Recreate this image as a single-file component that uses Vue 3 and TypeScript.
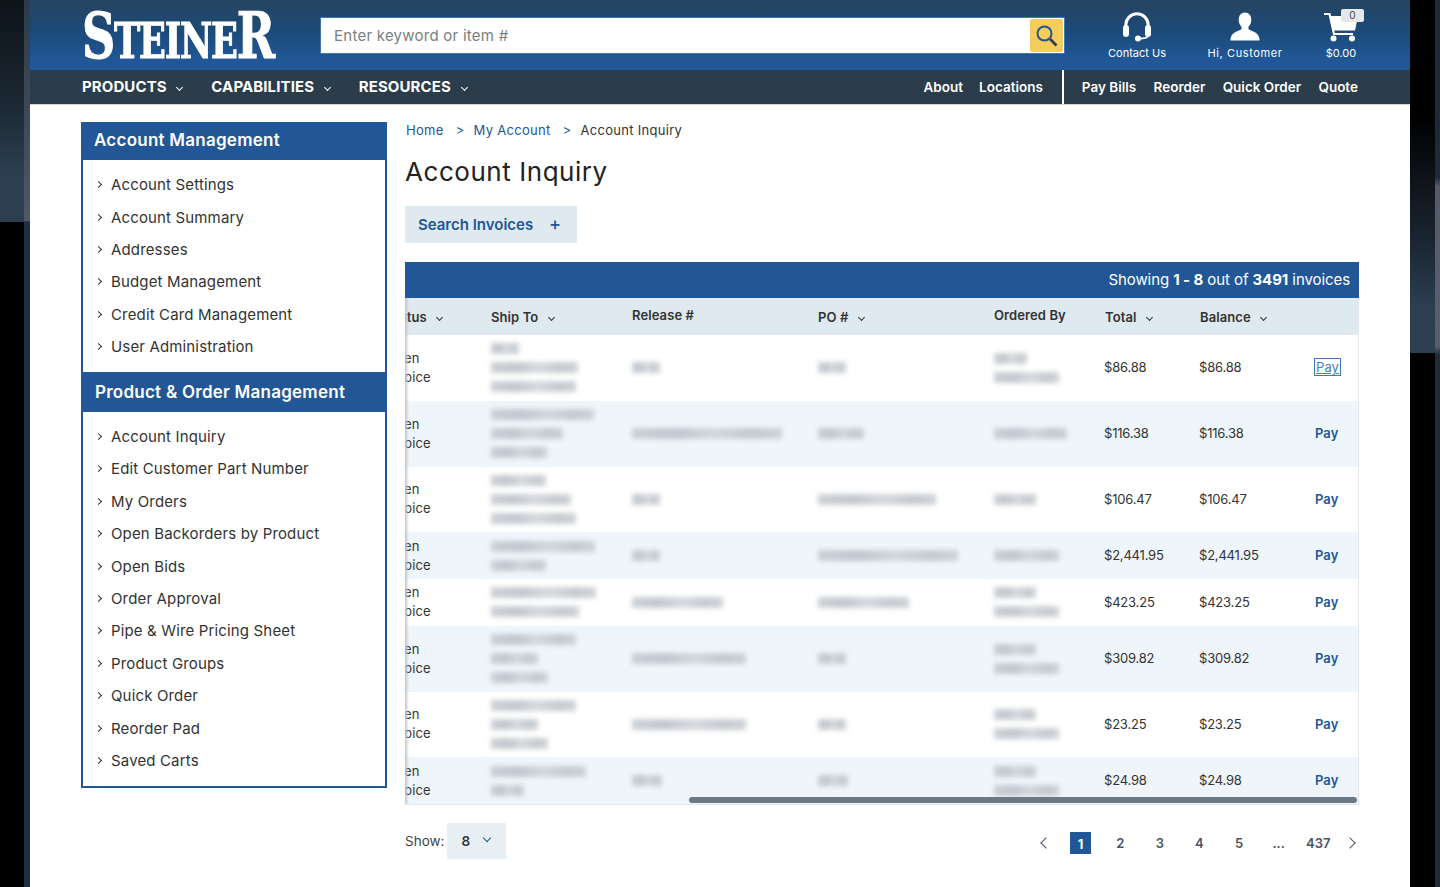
<script setup lang="ts">
// Account inquiry page: header, side menu, scrolled invoice table, pager.
type Invoice = {
  ship: number[];
  release: number;
  po: number;
  orderedBy: number[];
  total: string;
};

const topLinks = ["About", "Locations"];
const quickLinks = ["Pay Bills", "Reorder", "Quick Order", "Quote"];

const accountLinks = [
  "Account Settings",
  "Account Summary",
  "Addresses",
  "Budget Management",
  "Credit Card Management",
  "User Administration",
];
const orderLinks = [
  "Account Inquiry",
  "Edit Customer Part Number",
  "My Orders",
  "Open Backorders by Product",
  "Open Bids",
  "Order Approval",
  "Pipe & Wire Pricing Sheet",
  "Product Groups",
  "Quick Order",
  "Reorder Pad",
  "Saved Carts",
];

// Customer details are blurred out in the source, so only their widths are kept.
const invoices: Invoice[] = [
  { ship: [28, 87, 85], release: 28, po: 28, orderedBy: [33, 65], total: "$86.88" },
  { ship: [103, 72, 56], release: 150, po: 46, orderedBy: [73], total: "$116.38" },
  { ship: [55, 80, 85], release: 28, po: 118, orderedBy: [42], total: "$106.47" },
  { ship: [104, 55], release: 28, po: 140, orderedBy: [65], total: "$2,441.95" },
  { ship: [105, 88], release: 91, po: 91, orderedBy: [42, 65], total: "$423.25" },
  { ship: [85, 47, 57], release: 114, po: 28, orderedBy: [42, 65], total: "$309.82" },
  { ship: [85, 47, 57], release: 114, po: 28, orderedBy: [42, 65], total: "$23.25" },
  { ship: [95, 33], release: 30, po: 30, orderedBy: [42, 65], total: "$24.98" },
];

const pages = ["2", "3", "4", "5", "..."];
</script>

<template>
  <div class="page">
    <header class="masthead">
      <div class="logo-box">
        <div class="logo" aria-label="Steiner"><span class="big">S</span>TEINE<span class="big">R</span></div>
      </div>
      <div class="search">
        <input class="search-input" placeholder="Enter keyword or item #" />
        <button class="search-btn" type="button" aria-label="Search">
          <svg width="24" height="24" viewBox="0 0 24 24" fill="none">
            <circle cx="9.5" cy="9.5" r="7" stroke="#215797" stroke-width="2" />
            <path d="M15 15l6.5 6.5" stroke="#2b3c4b" stroke-width="2.6" />
          </svg>
        </button>
      </div>
      <div class="tools">
        <a class="tool tool-contact">
          <svg width="30" height="30" viewBox="0 0 30 30" fill="none">
            <path d="M3.8 15v-2a11.2 11.2 0 0 1 22.4 0v2" stroke="#fff" stroke-width="3" />
            <rect x="1" y="13" width="6" height="12" rx="3" fill="#fff" />
            <rect x="23" y="13" width="6" height="12" rx="3" fill="#fff" />
            <path d="M26 24c-.5 2-4 2.600-9 2.600" stroke="#fff" stroke-width="1.600" />
            <circle cx="16" cy="26.500" r="3" fill="#fff" />
          </svg>
          <span>Contact Us</span>
        </a>
        <a class="tool tool-user">
          <svg width="30" height="30" viewBox="0 0 30 30" fill="none">
            <path
              d="M15 .5c3.800 0 6.300 3 6.300 7.200 0 3-1.200 5.500-2.800 7v2.600c2 1.400 10.500 3 11 9.700v1.500H.5V27c.5-6.700 9-8.300 11-9.700v-2.600c-1.600-1.500-2.800-4-2.800-7C8.700 3.500 11.200.5 15 .5z"
              fill="#fff"
            />
          </svg>
          <span class="hi">Hi, Customer</span>
        </a>
        <a class="tool tool-cart">
          <svg width="36" height="30" viewBox="0 0 36 30" fill="none">
            <path d="M1 2h5.500l4.500 20h19" stroke="#fff" stroke-width="2.200" />
            <path d="M7 4h28l-3 14.500H10.500z" fill="#fff" />
            <circle cx="10.500" cy="26.500" r="3" fill="#fff" />
            <circle cx="29" cy="26.500" r="3" fill="#fff" />
          </svg>
          <span class="badge">0</span>
          <span>$0.00</span>
        </a>
      </div>
    </header>

    <nav class="navbar">
      <div class="nav-main">
        <a>PRODUCTS <i class="caret"></i></a>
        <a>CAPABILITIES <i class="caret"></i></a>
        <a>RESOURCES <i class="caret"></i></a>
      </div>
      <div class="nav-links">
        <a v-for="link in topLinks" :key="link">{{ link }}</a>
      </div>
      <div class="nav-links nav-quick">
        <a v-for="link in quickLinks" :key="link">{{ link }}</a>
      </div>
    </nav>

    <main class="main">
      <aside class="sidebar">
        <h2 class="side-title">Account Management</h2>
        <ul class="side-list">
          <li v-for="link in accountLinks" :key="link"><i class="arrow"></i>{{ link }}</li>
        </ul>
        <h2 class="side-title second">Product &amp; Order Management</h2>
        <ul class="side-list">
          <li v-for="link in orderLinks" :key="link"><i class="arrow"></i>{{ link }}</li>
        </ul>
      </aside>

      <section class="content">
        <div class="crumbs">
          <a>Home</a><span class="sep">&gt;</span><a>My Account</a><span class="sep">&gt;</span><span>Account Inquiry</span>
        </div>
        <h1 class="title">Account Inquiry</h1>
        <button class="filter-btn" type="button">Search Invoices <span class="plus">+</span></button>

        <div class="count-bar">Showing <b>1 - 8</b> out of <b>3491</b> invoices</div>
        <div class="table">
          <div class="row head">
            <div class="status-cell">Status <i class="caret dark"></i></div>
            <div>Ship To <i class="caret dark"></i></div>
            <div class="raised">Release #</div>
            <div>PO # <i class="caret dark"></i></div>
            <div class="raised">Ordered By</div>
            <div>Total <i class="caret dark"></i></div>
            <div>Balance <i class="caret dark"></i></div>
            <div></div>
          </div>
          <div v-for="(inv, i) in invoices" :key="i" class="row body" :class="{ tint: i % 2 === 1 }">
            <div class="status-cell">Open<br />Invoice</div>
            <div class="lines"><span v-for="w in inv.ship" :key="w" class="smear" :style="{ width: w + 'px' }"></span></div>
            <div class="lines"><span class="smear" :style="{ width: inv.release + 'px' }"></span></div>
            <div class="lines"><span class="smear" :style="{ width: inv.po + 'px' }"></span></div>
            <div class="lines"><span v-for="w in inv.orderedBy" :key="w" class="smear" :style="{ width: w + 'px' }"></span></div>
            <div class="amount">{{ inv.total }}</div>
            <div class="amount">{{ inv.total }}</div>
            <div><a class="pay" :class="{ focused: i === 0 }">Pay</a></div>
          </div>
          <div class="scrollbar"></div>
        </div>

        <div class="foot">
          <label class="show">Show: <span class="select">8 <i class="caret blue"></i></span></label>
          <div class="pager">
            <span class="page-item first"><i class="pg-arrow prev"></i></span>
            <span class="page-item"><b class="current">1</b></span>
            <span v-for="p in pages" :key="p" class="page-item">{{ p }}</span>
            <span class="page-item">437</span>
            <span class="page-item last"><i class="pg-arrow next"></i></span>
          </div>
        </div>
      </section>
    </main>
  </div>
</template>

<style>
html,
body {
  margin: 0;
  height: 887px;
  overflow: hidden;
}
/* Desktop showing either side of the browser window */
body {
  background-color: #000;
  background-repeat: no-repeat;
  background-image:
    linear-gradient(#0d1319, #1b2732 45%, #2c3e50 78%),
    linear-gradient(#2c3b4a, #4f5867 24.9%, #222f3d 25%),
    linear-gradient(#000, #1c2733 55%, #2c3e50 80%),
    linear-gradient(#1d2a38 20%, #56596a 21%, #5a5f6e 39%, #1f2c3a 40%);
  background-size:
    24px 222px,
    6px 887px,
    25px 238px,
    5px 887px;
  background-position:
    0 0,
    24px 0,
    1410px 115px,
    1435px 0;
}
</style>

<style scoped>
.page {
  width: 1380px;
  height: 887px;
  margin: 0 30px;
  overflow: hidden;
  background: #fff;
  font-family: Inter, "Open Sans", sans-serif;
  color: #333;
}

.masthead {
  height: 70px;
  box-sizing: border-box;
  padding: 0 52px;
  display: flex;
  align-items: center;
  background: linear-gradient(#26445f, #1c4a79 45%, #215797 85%);
}
.logo-box {
  flex: none;
  width: 238px;
  height: 58px;
  margin-top: 2px;
}
.logo {
  display: inline-block;
  font: 700 49px/58px "DejaVu Serif Condensed", "DejaVu Serif", serif;
  color: #fff;
  white-space: nowrap;
  letter-spacing: -1.5px;
  -webkit-text-stroke: 1px #fff;
  transform: scaleX(0.8);
  transform-origin: left center;
}
.logo .big {
  font-size: 64px;
}
.search {
  flex: none;
  width: 745px;
  height: 37px;
  box-sizing: border-box;
  margin-top: 1px;
  display: flex;
  align-items: center;
  padding-right: 1px;
  background: #fff;
  border: 1px solid #3f78b5;
}
.search-input {
  flex: 1;
  min-width: 0;
  height: 100%;
  border: 0;
  outline: 0;
  padding: 0 13px;
  font: 15px Inter, sans-serif;
  letter-spacing: 0.25px;
  background: transparent;
}
.search-input::placeholder {
  color: #7b7f83;
  opacity: 1;
}
.search-btn {
  width: 33px;
  height: 33px;
  padding: 0;
  display: flex;
  align-items: center;
  justify-content: center;
  background: #f4cd5c;
  border: 0;
  border-radius: 2px;
}
.tools {
  flex: none;
  display: flex;
  margin-left: 41px;
}
.tool {
  position: relative;
  display: flex;
  flex-direction: column;
  align-items: center;
  color: #fff;
  font-size: 11px;
  line-height: 14px;
  height: 48px;
  margin-top: 2px;
  gap: 4px;
}
.hi {
  letter-spacing: 0.6px;
}
.tool-contact {
  width: 62px;
}
.tool-user {
  width: 80px;
  margin-left: 37px;
}
.tool-cart {
  width: 50px;
  margin-left: 31px;
}
.badge {
  position: absolute;
  top: -3px;
  right: 2px;
  width: 23px;
  height: 13px;
  background: #e4e8ea;
  border-radius: 2px;
  color: #444;
  font-size: 10px;
  line-height: 13px;
  text-align: center;
}

.navbar {
  height: 34px;
  display: flex;
  align-items: stretch;
  padding-left: 52px;
  background: #2b3c4b;
  border-bottom: 1px solid #d8d0c4;
  box-sizing: content-box;
  color: #fff;
}
.nav-main {
  display: flex;
  align-items: center;
  gap: 25px;
  margin-top: -2px;
  font-size: 15px;
  font-weight: 700;
  letter-spacing: 0.1px;
  flex: 1;
}
.nav-links {
  display: flex;
  align-items: center;
  gap: 16px;
  font-size: 13.500px;
  font-weight: 600;
  padding-right: 19px;
}
.nav-quick {
  gap: 17.400px;
  border-left: 2px solid #fff;
  padding-left: 18px;
  padding-right: 52px;
}

.caret {
  display: inline-block;
  width: 4px;
  height: 4px;
  margin: 0 4px 2px 7px;
  border-right: 1px solid #fff;
  border-bottom: 1px solid #fff;
  transform: rotate(45deg);
}
.caret.dark {
  border-color: #333;
}
.caret.blue {
  width: 5px;
  height: 5px;
  margin: 0 0 5px 11px;
  border-width: 1.500px;
  border-color: #215797;
}

.main {
  display: flex;
  align-items: flex-start;
  gap: 18px;
  padding: 17px 51px 0;
}

.sidebar {
  width: 306px;
  box-sizing: border-box;
  flex: none;
  border: 2px solid #215797;
}
.side-title {
  margin: 0;
  height: 36px;
  padding-left: 11px;
  background: #215797;
  color: #fff;
  font-size: 17px;
  font-weight: 600;
  line-height: 32px;
  letter-spacing: 0.25px;
}
.side-title.second {
  height: 40px;
  line-height: 40px;
  padding-left: 12px;
}
.side-list {
  margin: 0;
  padding: 8.500px 0 9.500px;
  list-style: none;
}
.side-title.second + .side-list {
  padding: 8px 0 9px;
}
.side-list li {
  height: 32.400px;
  display: flex;
  align-items: center;
  padding-left: 13px;
  font-size: 15px;
  letter-spacing: 0.15px;
  color: #333;
}
.arrow {
  width: 4px;
  height: 4px;
  margin-right: 10px;
  border-right: 1px solid #333;
  border-bottom: 1px solid #333;
  transform: rotate(-45deg);
}

.content {
  width: 954px;
}
.crumbs {
  display: flex;
  padding: 0 0 0 1px;
  font-size: 13px;
  line-height: 17px;
  letter-spacing: 0.3px;
}
.crumbs a {
  color: #215797;
}
.sep {
  margin: 0 9px 0 12px;
  color: #215797;
}
.title {
  margin: 16px 0 0;
  font-size: 26px;
  font-weight: 400;
  line-height: 34px;
  color: #222;
  letter-spacing: 0.55px;
}
.filter-btn {
  display: block;
  width: 172px;
  height: 37px;
  margin-top: 17px;
  padding: 0 3px 0 0;
  border: 0;
  background: #dfe9f0;
  color: #215797;
  font: 600 15px Inter, sans-serif;
}
.plus {
  margin-left: 12px;
  font-size: 18px;
  font-weight: 500;
  line-height: 15px;
}

.count-bar {
  height: 36px;
  margin-top: 19px;
  padding-right: 9px;
  background: #215797;
  color: #fff;
  font-size: 15px;
  letter-spacing: -0.08px;
  line-height: 35px;
  text-align: right;
}

.table {
  position: relative;
  overflow: hidden;
  border-right: 1px solid #e4e6e8;
  border-bottom: 1px solid #e4e6e8;
  font-size: 13px;
  letter-spacing: 0.1px;
}
.table::before {
  content: "";
  position: absolute;
  top: 0;
  bottom: 0;
  left: 0;
  z-index: 1;
  width: 4px;
  background: linear-gradient(to right, #c2c6ca, rgba(194, 198, 202, 0));
}
.row {
  display: grid;
  grid-template-columns: 86px 141px 186px 176px 111px 95px 115px 43px;
  align-items: center;
}
.head {
  height: 37px;
  background: #dee9f0;
  font-weight: 600;
  color: #333;
}
.raised {
  margin-top: -3px;
}
.body {
  padding: 4.375px 0;
  line-height: 19px;
}
.tint {
  background: #eef5fb;
}
.status-cell {
  margin-left: -19px;
  white-space: nowrap;
}
.amount {
  margin-left: -1px;
  letter-spacing: -0.2px;
}
.lines {
  display: flex;
  flex-direction: column;
  align-items: flex-start;
}
.smear {
  display: block;
  height: 11px;
  margin: 4px 0;
  background: linear-gradient(90deg, #c4c9cf, #b9bfc6 30%, #cfd3d8 55%, #bcc2c8 80%, #c8ccd1);
  opacity: 0.85;
  filter: blur(2.500px);
}
.pay {
  color: #215797;
  font-weight: 600;
}
.pay.focused {
  padding: 0 1px;
  font-weight: 400;
  color: #4a82b8;
  text-decoration: underline;
  outline: 1px solid #3f78b5;
}
.scrollbar {
  position: absolute;
  left: 284px;
  right: 1px;
  bottom: 1px;
  z-index: 2;
  height: 6px;
  border-radius: 3px;
  background: #6b7885;
}

.foot {
  display: flex;
  align-items: center;
  justify-content: space-between;
  margin-top: 18px;
}
.show {
  display: flex;
  align-items: center;
  gap: 3px;
  font-size: 13.500px;
  color: #444;
}
.select {
  width: 59px;
  height: 36px;
  box-sizing: border-box;
  padding-left: 14px;
  background: #e7eff5;
  color: #333;
  font-weight: 600;
  line-height: 36px;
}
.pager {
  display: flex;
  align-items: center;
  margin: 3px 2px 0 0;
  font-size: 13px;
  font-weight: 600;
  color: #4b5563;
}
.page-item {
  width: 39.600px;
  display: flex;
  justify-content: center;
}
.page-item.first {
  width: 30px;
}
.page-item.last {
  width: 19px;
  justify-content: flex-end;
}
.current {
  width: 21px;
  height: 22px;
  background: #215797;
  color: #fff;
  font-weight: 700;
  line-height: 24px;
  text-align: center;
}
.pg-arrow {
  width: 7px;
  height: 7px;
  border-left: 1.500px solid #4b5563;
  border-bottom: 1.500px solid #4b5563;
}
.pg-arrow.prev {
  transform: rotate(45deg);
}
.pg-arrow.next {
  margin-right: 3px;
  transform: rotate(-135deg);
}
</style>
